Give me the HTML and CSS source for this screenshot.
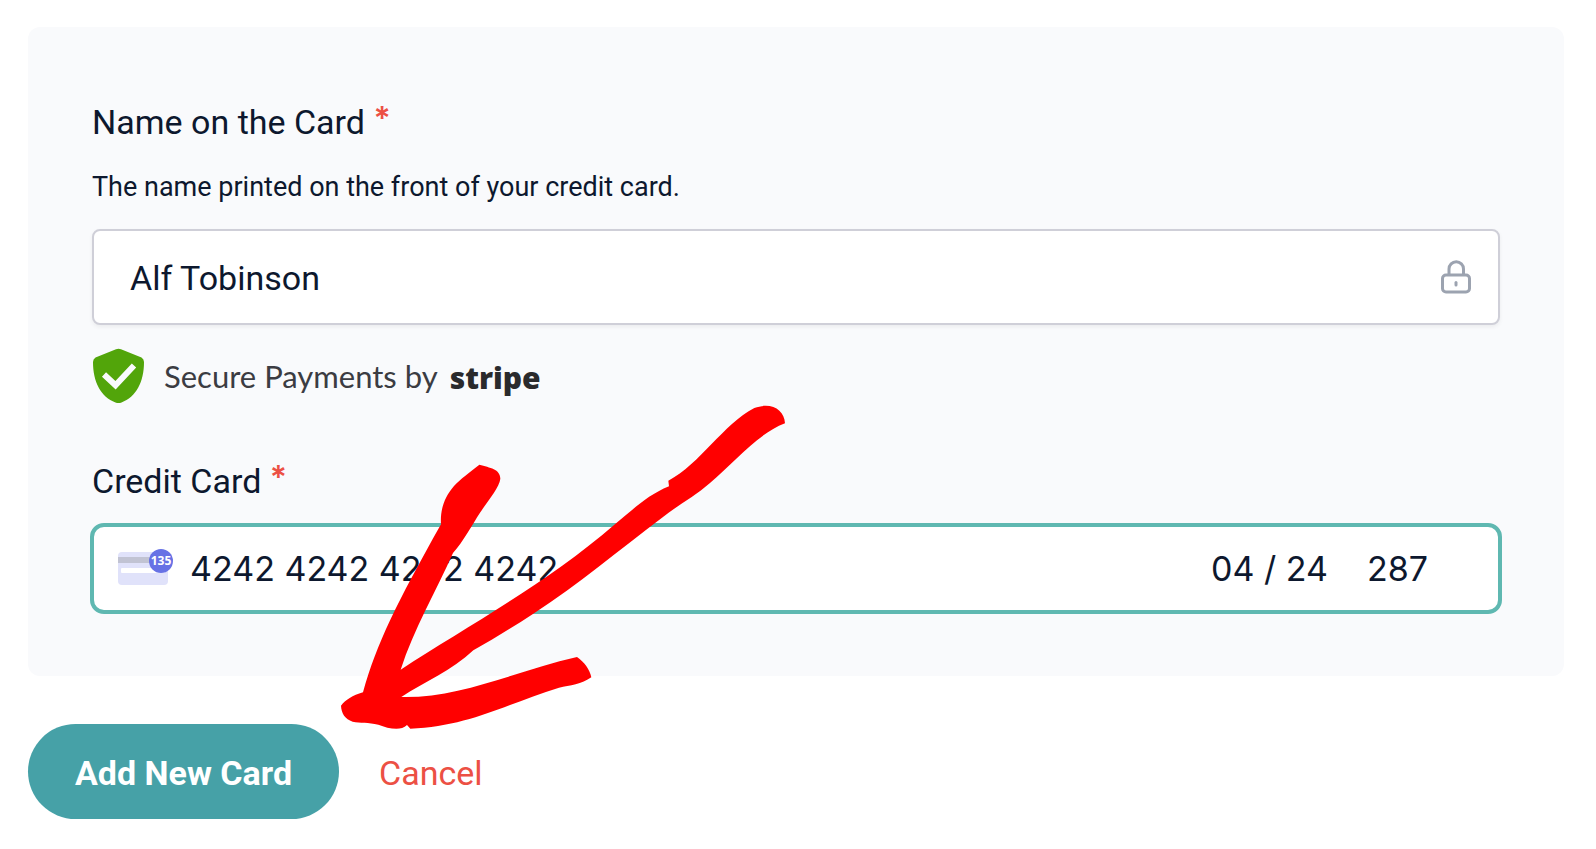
FILE: index.html
```html
<!DOCTYPE html>
<html lang="en">
<head>
<meta charset="utf-8">
<title>Add New Card</title>
<link rel="stylesheet" href="styles.css">
</head>
<body>
<form class="card-form">
  <section class="panel">
    <label class="label" for="card-name">Name on the Card <span class="required">*</span></label>
    <p class="hint" id="name-hint">The name printed on the front of your credit card.</p>
    <div class="text-field">
      <input class="input name-input" id="card-name" type="text" value="Alf Tobinson" aria-describedby="name-hint">
      <svg class="lock" viewBox="0 0 32 36" aria-hidden="true">
        <path d="M9 15.500V10a7 7 0 0 1 14.500 0V15.500" />
        <rect x="2.500" y="16" width="27" height="17" rx="3.500" />
        <path d="M16 23.500v2.500" />
      </svg>
    </div>
    <div class="secure">
      <svg class="shield" viewBox="0 0 52 56" aria-hidden="true">
        <path fill="#52a50a" d="M24 1.300q2.500-1.200 5 0L49.500 9.500q2.500 1.500 2.500 4.500C52 34 44 49 29.500 54.500q-3 1.200-6 0C9 49 1 34 1 14q0-3 2.500-4.500z"/>
        <path fill="none" stroke="#f9fafc" stroke-width="6" d="M12 26.500l11.500 10.700L42 17.500"/>
      </svg>
      <span class="secure-text">Secure Payments by</span>
      <span class="stripe">stripe</span>
    </div>
    <label class="label" for="card-number">Credit Card <span class="required">*</span></label>
    <div class="card-field">
      <span class="card-icon" aria-hidden="true">
        <svg class="card-art" viewBox="0 0 50 33">
          <rect width="50" height="33" rx="4" fill="#e0e2fa"/>
          <rect y="5" width="50" height="6" fill="#c1c3d3"/>
          <rect x="3" y="16" width="44" height="5" rx="1" fill="#fff"/>
        </svg>
        <span class="badge">135</span>
      </span>
      <input class="input number-input" id="card-number" type="text" value="4242 4242 4242 4242">
      <input class="input expiry-input" type="text" value="04 / 24" aria-label="Expiry date">
      <input class="input cvc-input" type="text" value="287" aria-label="Security code">
    </div>
  </section>
  <div class="actions">
    <button class="submit" type="button">Add New Card</button>
    <a class="cancel" href="#">Cancel</a>
  </div>
</form>
<svg class="arrow" viewBox="0 0 1410 1020" aria-hidden="true">
  <path d="M33 917C46 900 68 886 99 877C140 730 200 610 333 373C330 325 345 290 372 258C390 237 420 217 448 194C480 203 511 207 511 236C508 263 475 300 451 337C425 377 400 425 369 459C320 570 250 690 212 809C410 680 650 550 853 374C905 333 950 286 1017 259L1015 242C1110 192 1180 72 1273 24C1325 5 1363 30 1365 70C1280 103 1215 185 1140 249C1095 288 1045 315 1000 350C860 455 750 550 610 641C550 680 490 717 430 751C365 812 285 845 214 891C390 895 560 812 741 771C763 787 779 807 784 832C755 852 720 857 687 863C540 907 420 980 241 986L231 975C211 995 175 985 145 974C115 966 90 970 68 965C45 957 34 940 33 917Z"/>
</svg>
</body>
</html>
```
FILE: styles.css
```css
* { box-sizing: border-box; }

body {
  position: relative;
  margin: 0;
  background: #fff;
  color: #0d182e;
  font-family: Roboto, "Liberation Sans", sans-serif;
  font-size: 34px;
}

.card-form { padding: 27px 32px 29px 28px; }

.panel {
  padding: 73px 64px 62px;
  border-radius: 12px;
  background: #f9fafc;
}

.label {
  display: block;
  height: 44px;
  line-height: 44px;
}

.required {
  color: #ec5044;
  font-family: Inter, sans-serif;
  font-size: 32px;
  font-weight: 600;
  line-height: 1;
  vertical-align: 4px;
}

.hint {
  margin: 24px 0 23px;
  font-size: 27px;
  line-height: 38px;
}

.text-field {
  display: flex;
  align-items: center;
  height: 96px;
  padding: 0 26px 0 36px;
  border: 2px solid #cfcfd8;
  border-radius: 8px;
  background: #fff;
  box-shadow: 0 2px 4px rgba(0, 0, 0, 0.06);
}

.input {
  min-width: 0;
  padding: 0;
  border: 0;
  outline: 0;
  background: transparent;
  color: inherit;
  font: inherit;
}

.name-input {
  flex: 1;
  padding-top: 2px;
}

.lock {
  width: 32px;
  height: 36px;
  fill: none;
  stroke: #9ca3b0;
  stroke-width: 3;
  stroke-linecap: round;
}

.secure {
  display: flex;
  align-items: center;
  margin: 23px 0 55px;
}

.shield {
  width: 52px;
  height: 56px;
}

.secure-text {
  margin: 0 12px 0 20px;
  color: #3b3c42;
  font-family: Lato, sans-serif;
  font-size: 31px;
}

.stripe {
  padding-top: 2px;
  color: #2a2a2c;
  font-family: "Open Sans", sans-serif;
  font-size: 30px;
  font-weight: 800;
}

.card-field {
  display: flex;
  align-items: center;
  height: 91px;
  margin: 20px -2px 0;
  padding: 0 24px;
  border: 4px solid #5fb8b1;
  border-radius: 14px;
  background: #fff;
  font-family: Inter, sans-serif;
  font-size: 34px;
}

.card-icon {
  position: relative;
  width: 50px;
  height: 33px;
  margin-right: 22px;
}

.card-art { display: block; }

.badge {
  position: absolute;
  top: -3px;
  right: -5px;
  width: 24px;
  height: 24px;
  border-radius: 50%;
  background: #6772e5;
  color: #fff;
  font-family: "Open Sans", sans-serif;
  font-size: 12px;
  font-weight: 700;
  line-height: 24px;
  text-align: center;
}

.number-input { flex: 1; }
.expiry-input { width: 156px; }
.cvc-input { width: 107px; }

.actions {
  display: flex;
  align-items: center;
  gap: 40px;
  margin-top: 48px;
}

.submit {
  height: 95px;
  padding: 3px 47px 0;
  border: 0;
  border-radius: 48px;
  background: #46a1a7;
  color: #fff;
  font: inherit;
  font-weight: 700;
}

.cancel {
  padding-top: 3px;
  color: #ec5044;
  text-decoration: none;
}

.arrow {
  position: absolute;
  top: 400px;
  left: 330px;
  width: 470px;
  height: 340px;
  fill: #f00;
  pointer-events: none;
}
```
